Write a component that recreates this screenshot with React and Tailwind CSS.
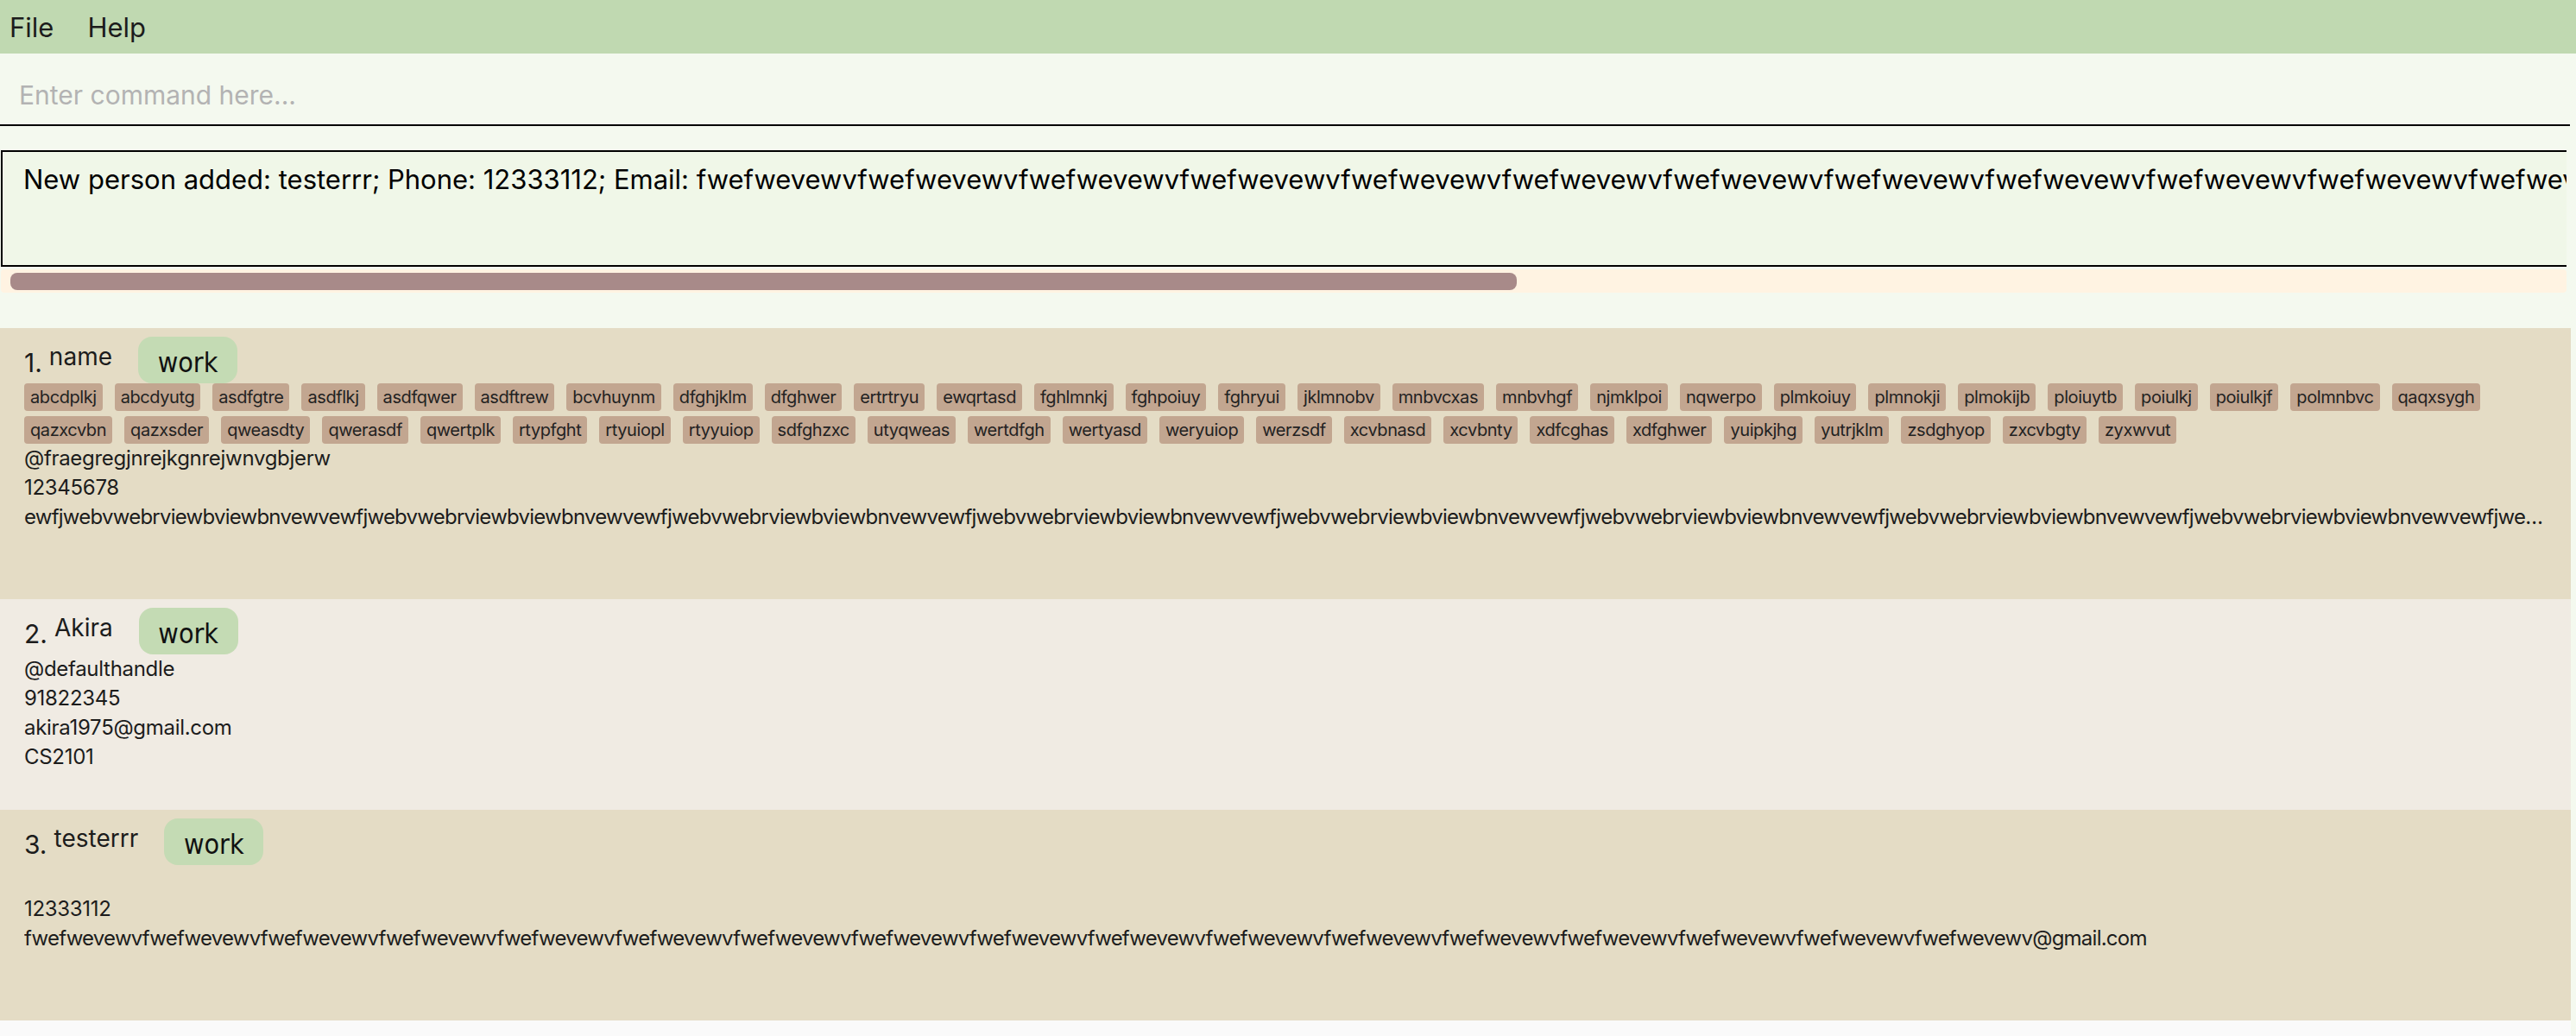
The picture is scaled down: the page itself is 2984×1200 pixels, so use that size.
import React from "react";

const EMAIL = "fwefwevewv".repeat(17) + "@gmail.com";
const ADDRESS = "ewfjwebvwebrviewbviewbnvewv".repeat(30);

const TAGS = [
  "abcdplkj", "abcdyutg", "asdfgtre", "asdflkj", "asdfqwer", "asdftrew", "bcvhuynm",
  "dfghjklm", "dfghwer", "ertrtryu", "ewqrtasd", "fghlmnkj", "fghpoiuy", "fghryui",
  "jklmnobv", "mnbvcxas", "mnbvhgf", "njmklpoi", "nqwerpo", "plmkoiuy", "plmnokji",
  "plmokijb", "ploiuytb", "poiulkj", "poiulkjf", "polmnbvc", "qaqxsygh", "qazxcvbn",
  "qazxsder", "qweasdty", "qwerasdf", "qwertplk", "rtypfght", "rtyuiopl", "rtyyuiop",
  "sdfghzxc", "utyqweas", "wertdfgh", "wertyasd", "weryuiop", "werzsdf", "xcvbnasd",
  "xcvbnty", "xdfcghas", "xdfghwer", "yuipkjhg", "yutrjklm", "zsdghyop", "zxcvbgty",
  "zyxwvut",
];

// long strings get a tighter tracking so they run as far as in the app
const persons = [
  {
    name: "name",
    tags: TAGS,
    lines: [
      { text: "@fraegregjnrejkgnrejwnvgbjerw" },
      { text: "12345678" },
      { text: ADDRESS, tight: true },
      { text: "" },
    ],
    bg: "bg-[#e4dcc5]",
  },
  {
    name: "Akira",
    tags: [],
    lines: [
      { text: "@defaulthandle" },
      { text: "91822345" },
      { text: "akira1975@gmail.com" },
      { text: "CS2101" },
    ],
    bg: "bg-[#f0ebe3]",
  },
  {
    name: "testerrr",
    tags: [],
    lines: [{ text: "" }, { text: "12333112" }, { text: EMAIL, tight: true }, { text: "" }],
    bg: "bg-[#e4dcc5]",
  },
];

const PersonCard = ({ index, person }) => (
  <div className={`${person.bg} pl-[28px] pr-[28px] pt-[10px] pb-[44px]`}>
    <div className="flex items-baseline h-[54px]">
      <span className="text-[30px]">{index}.</span>
      <span className="relative -top-[8px] ml-[8px] text-[28px]">{person.name}</span>
      <span className="ml-[30px] h-[54px] w-[115px] flex items-center justify-center pt-[6px] rounded-[16px] bg-[#c4dbb4] text-[32px] text-[#111] font-['DejaVu_Sans_Condensed','DejaVu_Sans',sans-serif]">
        work
      </span>
    </div>
    {person.tags.length > 0 && (
      <div className="flex flex-wrap gap-x-[14px] gap-y-[6px]">
        {person.tags.map((tag) => (
          <span
            key={tag}
            className="h-[32px] px-[7px] flex items-center rounded-[4px] bg-[#c2a690] text-[20px] tracking-[-0.42px] text-[#222]"
          >
            {tag}
          </span>
        ))}
      </div>
    )}
    {person.lines.map((line, i) => (
      <div
        key={i}
        className={`h-[34px] text-[24px] leading-[34px] whitespace-nowrap overflow-hidden text-ellipsis ${
          line.tight ? "tracking-[-0.76px]" : "tracking-[-0.3px]"
        }`}
      >
        {line.text}
      </div>
    ))}
  </div>
);

const App = () => {
  return (
    <div className="w-[2984px] h-[1200px] overflow-hidden bg-[#f4f9ef] text-[#1c1c1c] font-['Inter',sans-serif] flex flex-col">
      <div className="h-[62px] shrink-0 bg-[#c0d9b1] flex pt-[14px] text-[31px] leading-[36px]">
        <span className="ml-[11px]">File</span>
        <span className="ml-[39px]">Help</span>
      </div>

      <div className="h-[84px] shrink-0 w-[2977px] border-b-2 border-black pl-[22px] pt-[30px] text-[30px] leading-[36px] text-[#b3b3b3]">
        Enter command here...
      </div>

      <div className="mt-[28px] ml-[1px] w-[2972px] shrink-0">
        <div className="h-[135px] border-y-2 border-l-2 border-black bg-[#f0f7e8] overflow-hidden pl-[24px] pt-[14px] text-[31px] leading-[36px] text-black whitespace-nowrap">
          New person added: testerrr; Phone: 12333112; Email: {EMAIL}; Handle: ; Address: ; Tags: [work]
        </div>
        <div className="mt-[3px] h-[27px] rounded-[4px] bg-[#fff3e2] flex items-center pl-[11px]">
          <div className="h-[20px] w-[1745px] rounded-[8px] bg-[#a88a89]" />
        </div>
      </div>

      <div className="mt-[41px] w-[2978px] flex-1 bg-[#fafafa]">
        {persons.map((person, i) => (
          <PersonCard key={person.name} index={i + 1} person={person} />
        ))}
      </div>
    </div>
  );
};

export default App;
